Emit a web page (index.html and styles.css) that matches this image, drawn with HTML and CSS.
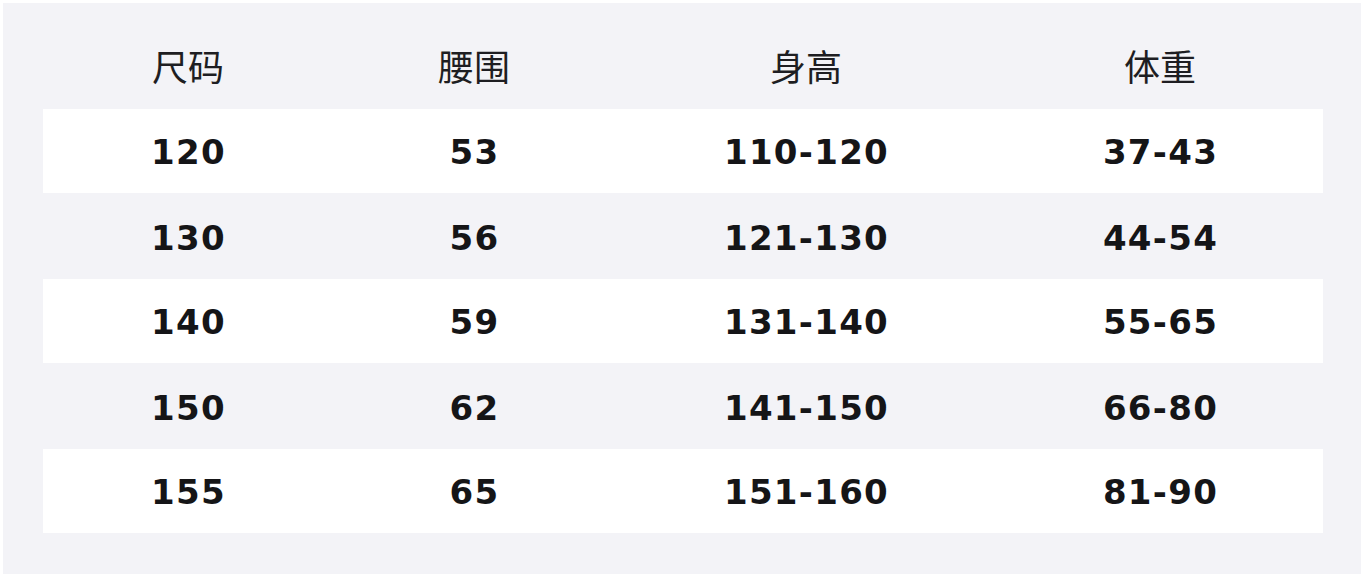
FILE: index.html
```html
<!DOCTYPE html>
<html lang="zh">
<head>
<meta charset="utf-8">
<link rel="stylesheet" href="styles.css">
</head>
<body>
<div class="panel">
  <div class="row head">
    <div class="cell">尺码</div>
    <div class="cell">腰围</div>
    <div class="cell">身高</div>
    <div class="cell">体重</div>
  </div>
  <div class="row odd">
    <div class="cell">120</div><div class="cell">53</div><div class="cell">110-120</div><div class="cell">37-43</div>
  </div>
  <div class="row">
    <div class="cell">130</div><div class="cell">56</div><div class="cell">121-130</div><div class="cell">44-54</div>
  </div>
  <div class="row odd">
    <div class="cell">140</div><div class="cell">59</div><div class="cell">131-140</div><div class="cell">55-65</div>
  </div>
  <div class="row">
    <div class="cell">150</div><div class="cell">62</div><div class="cell">141-150</div><div class="cell">66-80</div>
  </div>
  <div class="row odd">
    <div class="cell">155</div><div class="cell">65</div><div class="cell">151-160</div><div class="cell">81-90</div>
  </div>
</div>
</body>
</html>
```

FILE: styles.css
```css
html, body {
  margin: 0;
  padding: 0;
  background: #ffffff;
}
body {
  width: 1366px;
  height: 578px;
  overflow: hidden;
}
.panel {
  margin: 3px 0 0 3px;
  width: 1358px;
  height: 571px;
  background: #f3f3f7;
  box-sizing: border-box;
  padding: 0 38px 40px 40px;
  display: flex;
  flex-direction: column;
}
.row {
  display: grid;
  grid-template-columns: 290px 282px 382px 326px;
  height: 85px;
  align-items: center;
  font-family: "DejaVu Sans", sans-serif;
  font-weight: bold;
  font-size: 34px;
  letter-spacing: 1.3px;
  color: #151517;
}
.row.odd {
  background: #ffffff;
  height: 84px;
  margin-bottom: 1px;
}
.row.head {
  height: 106px;
  font-family: "Noto Sans CJK SC", sans-serif;
  font-weight: 400;
  font-size: 36px;
  letter-spacing: 0;
  color: #1e1e22;
  padding-top: 18px;
  box-sizing: border-box;
}
.cell {
  text-align: center;
  line-height: 1;
  padding: 2px 0 0 1px;
}
.head .cell {
  padding: 0;
}
```
